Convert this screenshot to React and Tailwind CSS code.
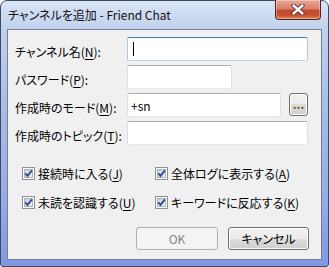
import React from 'react'

const font = "font-['Noto_Sans_CJK_JP',sans-serif] [font-feature-settings:'palt']"

function Key({ text, k }) {
  return (
    <span>
      {text}(<u className="underline-offset-2">{k}</u>)
    </span>
  )
}

function TextBox({ w, focused, children }) {
  const border = focused
    ? 'border-t-[#3d7bad] border-x-[#a4c9e3] border-b-[#b7d9ed]'
    : 'border-t-[#abadb3] border-x-[#dbdfe6] border-b-[#e3e9ef]'
  return (
    <div
      className={`h-[24px] bg-white border rounded-[2px] flex items-center pl-[3px] text-[12px] text-black ${border}`}
      style={{ width: w }}
    >
      {children}
    </div>
  )
}

function Check({ children }) {
  return (
    <div className="h-[17px] flex items-center gap-[3px]">
      <svg width="13" height="13" viewBox="0 0 13 13" className="shrink-0">
        <defs>
          <linearGradient id="cbg" x1="0" y1="0" x2="1" y2="1">
            <stop offset="0" stopColor="#c9cdd3" />
            <stop offset="1" stopColor="#f6f6f6" />
          </linearGradient>
        </defs>
        <rect x="0.5" y="0.5" width="12" height="12" fill="#fff" stroke="#8e8f8f" />
        <rect x="2.5" y="2.5" width="8" height="8" fill="url(#cbg)" stroke="#adb2b8" />
        <path d="M3.3 6.4 L5.5 8.9 L9.9 3.3" fill="none" stroke="#2e4d9c" strokeWidth="1.9" />
      </svg>
      <span className="text-[12px] leading-[15px] text-black">{children}</span>
    </div>
  )
}

const btn =
  'h-[23px] rounded-[3px] border border-[#707070] bg-[linear-gradient(180deg,#f2f2f2_0%,#ebebeb_50%,#dddddd_50%,#cfcfcf_100%)] shadow-[inset_0_0_0_1px_#fbfbfb] flex items-center justify-center text-[12px] text-black'

export default function App() {
  return (
    <div className={`relative w-[329px] h-[267px] bg-white overflow-hidden ${font}`}>
      <div className="w-full h-full flex flex-col rounded-t-[7px] rounded-b-[3px] border border-[#3d4b62] bg-[linear-gradient(180deg,#d9e4f5_0%,#bfcfec_12%,#aabde6_40%,#97abe4_75%,#8297e2_100%)]">
        {/* title bar */}
        <div className="h-[28px] shrink-0 pl-[7px] pt-[6px] text-[12px] leading-[15px] text-[#111]">
          チャンネルを追加 - Friend Chat
        </div>

        {/* client area */}
        <div className="flex-1 mx-[6px] mb-[6px] border border-[#6f7f9c] bg-[#f0f0f0] pl-[7px] pt-[7px] pr-[12px] text-[12px] text-black">
          <div className="flex flex-col gap-[4px]">
            <div className="flex items-center">
              <div className="w-[112px] pt-[5px]">
                <Key text="チャンネル名" k="N" />:
              </div>
              <TextBox w={181} focused>
                <div className="ml-[2px] w-px h-[14px] bg-black" />
              </TextBox>
            </div>
            <div className="flex items-center">
              <div className="w-[112px] pt-[5px]">
                <Key text="パスワード" k="P" />:
              </div>
              <TextBox w={105} />
            </div>
            <div className="flex items-center">
              <div className="w-[112px] pt-[5px]">
                <Key text="作成時のモード" k="M" />:
              </div>
              <TextBox w={154}>
                <span className="pt-[2px]">+sn</span>
              </TextBox>
              <div className={`${btn} w-[19px] ml-[8px] -mt-[1px] font-bold text-[11px] !text-[#7a4e12] items-end pb-[2px]`}>
                ...
              </div>
            </div>
            <div className="flex items-center">
              <div className="w-[112px] pt-[5px]">
                <Key text="作成時のトピック" k="T" />:
              </div>
              <TextBox w={181} />
            </div>
          </div>

          {/* checkboxes */}
          <div className="mt-[20px] pl-[7px] grid grid-cols-[133px_1fr] gap-y-[12px]">
            <Check>
              <Key text="接続時に入る" k="J" />
            </Check>
            <Check>
              <Key text="全体ログに表示する" k="A" />
            </Check>
            <Check>
              <Key text="未読を認識する" k="U" />
            </Check>
            <Check>
              <Key text="キーワードに反応する" k="K" />
            </Check>
          </div>

          {/* buttons */}
          <div className="mt-[16px] flex justify-end gap-[10px]">
            <div className="w-[82px] h-[23px] rounded-[3px] border border-[#adb2b5] bg-[#f4f4f4] flex items-center justify-center text-[12px] text-[#838383]">
              OK
            </div>
            <div className={`${btn} w-[81px]`}>キャンセル</div>
          </div>
        </div>
      </div>

      {/* close button */}
      <div className="absolute top-0 left-[275px] w-[46px] h-[20px] rounded-b-[4px] border border-[#5b2119] border-t-0 bg-[linear-gradient(180deg,#eaa798_0%,#d9816c_45%,#c34a33_55%,#c4502f_80%,#df8a5e_100%)] shadow-[inset_0_0_0_1px_rgba(255,255,255,0.35)] flex items-center justify-center">
        <svg width="14" height="11" viewBox="0 0 14 11">
          <path d="M2.5 1.5 L11.5 9.5 M11.5 1.5 L2.5 9.5" stroke="#4a2a28" strokeWidth="4.2" strokeLinecap="round" />
          <path d="M2.5 1.5 L11.5 9.5 M11.5 1.5 L2.5 9.5" stroke="#ffffff" strokeWidth="2.4" strokeLinecap="round" />
        </svg>
      </div>
    </div>
  )
}
